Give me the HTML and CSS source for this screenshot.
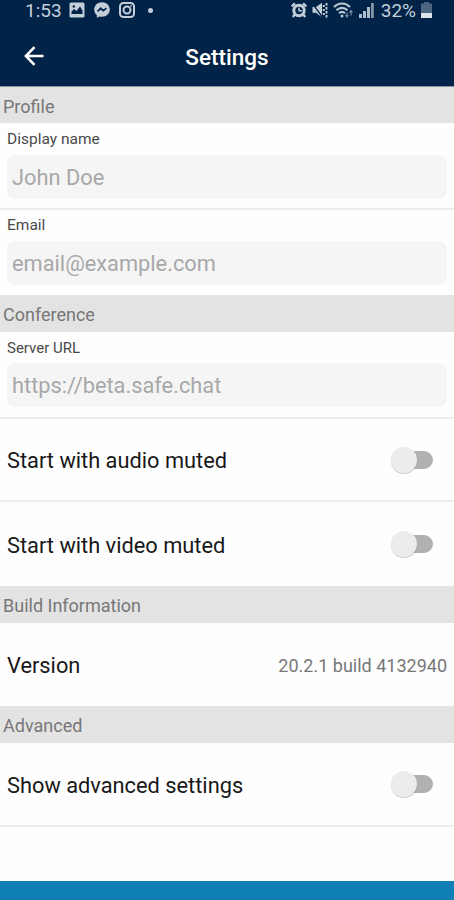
FILE: index.html
```html
<!DOCTYPE html>
<html lang="en">
<head>
    <meta charset="UTF-8">
    <meta name="viewport" content="width=device-width, initial-scale=1.0">
    <title>Settings</title>
    <link rel="stylesheet" href="styles.css">
</head>
<body>
    <div class="app">
        <header class="header">
            <div class="status-bar">
                <div class="status-left">
                    <span class="clock">1:53</span>
                    <svg width="16" height="16" viewBox="0 0 16 16">
                        <rect x="0.5" y="0.5" width="15" height="15" rx="1.500" fill="#c3ced9"/>
                        <path d="M2.500 12V9.500l2.500-2.500 2.500 2 3.500-4.500 2.500 4V12z" fill="#002347"/>
                        <circle cx="4.800" cy="4.500" r="1.200" fill="#002347"/>
                    </svg>
                    <svg width="16" height="16" viewBox="0 0 16 16">
                        <path d="M8 .3C3.600.3.2 3.400.2 7.600c0 2.300 1 4.200 2.600 5.500v2.700l2.500-1.400c.8.3 1.700.4 2.700.4 4.400 0 7.800-3.100 7.800-7.200S12.400.3 8 .3z" fill="#c3ced9"/>
                        <path d="M3.500 9.500l3.200-3.200 2.500 2.300 3.300-2.500" fill="none" stroke="#002347" stroke-width="1.700"/>
                    </svg>
                    <svg width="16" height="16" viewBox="0 0 16 16" fill="none" stroke="#c3ced9" stroke-width="2">
                        <rect x="1" y="1" width="14" height="14" rx="3.500"/>
                        <circle cx="8" cy="8" r="3.500"/>
                        <circle cx="12" cy="4" r=".5" stroke-width="1"/>
                    </svg>
                    <span class="dot"></span>
                </div>
                <div class="status-right">
                    <svg width="16" height="16" viewBox="0 0 16 16">
                        <circle cx="8" cy="8.500" r="5.200" fill="none" stroke="#c3ced9" stroke-width="3"/>
                        <path d="M.8 4.500L4 1.300M15.200 4.500L12 1.300M3.500 12.800L1.800 15M12.500 12.800l1.700 2.200" stroke="#c3ced9" stroke-width="2.400"/>
                        <path d="M8 5.500v3.300h2.800" fill="none" stroke="#c3ced9" stroke-width="1.400"/>
                    </svg>
                    <svg width="16" height="16" viewBox="0 0 16 16">
                        <path d="M.5 5h3.500L10 .8v14.400L4 10.800H.5z" fill="#c3ced9"/>
                        <path d="M0 1l10 13.500" stroke="#002347" stroke-width="1.300"/>
                        <path d="M11.800 3v2M11.800 7v2M11.800 11v2M14.500 1v2.500M14.500 5v2.500M14.500 9v2.500M14.500 13v2.500" stroke="#c3ced9" stroke-width="1.900"/>
                    </svg>
                    <svg width="21" height="16" viewBox="0 0 21 16" fill="none" stroke="#b7c4d1" stroke-width="2.200">
                        <path d="M1 5c4.500-4.700 11.500-4.700 16 0M3.500 8.200c3.200-3.200 7.800-3.200 11 0M6 11.300c1.800-1.800 4.200-1.800 6 0"/>
                        <circle cx="9" cy="14" r="1.500" fill="#b7c4d1" stroke="none"/>
                        <path d="M14 10.500V15M12.500 13l1.500 2 1.500-2M18 13.500v-5M16.500 10.500l1.500-2 1.500 2" stroke="#7e93a7" stroke-width="1.100"/>
                    </svg>
                    <svg width="15" height="16" viewBox="0 0 15 16" fill="#aebdcb">
                        <path d="M0 12h3v4H0zM4 9h3v7H4zM8 5h3v11H8z"/>
                        <path d="M12 1h2.800v15H12z" fill="#8496a9"/>
                    </svg>
                    <span class="percent">32%</span>
                    <svg width="11" height="16" viewBox="0 0 11 16">
                        <path d="M3 0h5v1.500h3V16H0V1.500h3z" fill="#4d6780"/>
                        <path d="M0 11h11v5H0z" fill="#dce3ea"/>
                    </svg>
                </div>
            </div>
            <div class="title-bar">
                <button class="back-btn" aria-label="Back">
                    <svg width="20" height="20" viewBox="0 0 20 20" fill="none" stroke="#fff" stroke-width="2.600">
                        <path d="M19.500 10H2M10.500 1.200L1.900 10l8.600 8.800"/>
                    </svg>
                </button>
                <h1>Settings</h1>
            </div>
        </header>

        <main>
            <h2 class="section-title first">Profile</h2>
            <div class="field">
                <label for="displayName">Display name</label>
                <input type="text" id="displayName" placeholder="John Doe">
            </div>
            <div class="field email-field">
                <label for="email">Email</label>
                <input type="email" id="email" placeholder="email@example.com">
            </div>

            <h2 class="section-title">Conference</h2>
            <div class="field server-field">
                <label for="serverUrl">Server URL</label>
                <input type="url" id="serverUrl" placeholder="https://beta.safe.chat">
            </div>
            <div class="row">
                <span>Start with audio muted</span>
                <span class="switch"></span>
            </div>
            <div class="row last tall">
                <span>Start with video muted</span>
                <span class="switch"></span>
            </div>

            <h2 class="section-title">Build Information</h2>
            <div class="row last">
                <span>Version</span>
                <span class="version">20.2.1 build 4132940</span>
            </div>

            <h2 class="section-title">Advanced</h2>
            <div class="row tall">
                <span>Show advanced settings</span>
                <span class="switch"></span>
            </div>
        </main>

        <footer class="footer"></footer>
    </div>
</body>
</html>
```
FILE: styles.css
```css
:root {
    --navy: #002347;
    --blue: #107fb5;
    --section: #e3e3e3;
    --input: #f5f5f5;
    --line: #ededed;
    --status: #c3ced9;
}

* {
    box-sizing: border-box;
    margin: 0;
    padding: 0;
}

body {
    font-family: Roboto, 'Liberation Sans', sans-serif;
    background: #fefefe;
    color: #181818;
}

.app {
    display: flex;
    flex-direction: column;
    height: 900px;
    overflow: hidden;
}

.header {
    height: 87px;
    background: var(--navy);
    border-bottom: 1px solid #8796a5;
    flex-shrink: 0;
}

.status-bar {
    display: flex;
    justify-content: space-between;
    height: 22px;
    padding: 0 22px 0 25px;
    color: var(--status);
    font-size: 19px;
    line-height: 22px;
}

.status-left,
.status-right {
    display: flex;
    align-items: center;
}

.status-bar svg {
    margin-bottom: 2px;
}

.status-left {
    gap: 9px;
}

.clock {
    width: 35px;
}

.dot {
    width: 5px;
    height: 5px;
    margin: 0 0 2px 4px;
    border-radius: 50%;
    background: var(--status);
}

.status-right {
    gap: 5px;
}

.percent {
    margin-left: 2px;
}

.title-bar {
    display: grid;
    grid-template-columns: 68px 1fr 68px;
    align-items: center;
    height: 64px;
    padding-top: 5px;
}

.back-btn {
    width: 20px;
    height: 20px;
    margin: 0 0 2px 24px;
    border: none;
    background: none;
    cursor: pointer;
}

.back-btn svg {
    display: block;
}

h1 {
    color: #fff;
    font-size: 22.5px;
    font-weight: 500;
    line-height: 28px;
    text-align: center;
}

.section-title {
    height: 37px;
    padding-left: 3px;
    background: var(--section);
    color: #777;
    font-size: 18px;
    font-weight: 400;
    line-height: 39px;
}

.section-title.first {
    height: 36px;
}

.field {
    height: 87px;
    padding: 6px 7px 0;
    border-bottom: 2px solid var(--line);
}

.field label {
    display: block;
    height: 26px;
    color: #4a4a4a;
    font-size: 15.5px;
    line-height: 20px;
}

.field input {
    display: block;
    width: 100%;
    height: 44px;
    padding: 0 5px;
    border: none;
    border-radius: 8px;
    background: var(--input);
    font-family: inherit;
    font-size: 21.8px;
}

.field input::placeholder {
    color: #a8a8a8;
    opacity: 1;
}

.email-field {
    height: 85px;
    padding-top: 5px;
    border-bottom: none;
}

.server-field label {
    height: 25px;
    font-size: 15px;
}

.row {
    display: flex;
    justify-content: space-between;
    align-items: center;
    height: 83px;
    padding: 2px 7px 0;
    border-bottom: 2px solid var(--line);
    font-size: 21.8px;
}

.row.last {
    border-bottom: none;
}

.row.tall {
    height: 84px;
}

.switch {
    position: relative;
    width: 36px;
    height: 18px;
    margin: 0 14px 2px 0;
    border-radius: 9px;
    background: #b1b1b1;
}

.switch::before {
    content: "";
    position: absolute;
    left: -6px;
    top: -4px;
    width: 26px;
    height: 26px;
    border-radius: 50%;
    background: #ececec;
    box-shadow: 0 1px 1px rgba(0, 0, 0, 0.2);
}

.version {
    color: #777;
    font-size: 18px;
}

.footer {
    height: 19px;
    margin-top: auto;
    background: var(--blue);
    flex-shrink: 0;
}
```
